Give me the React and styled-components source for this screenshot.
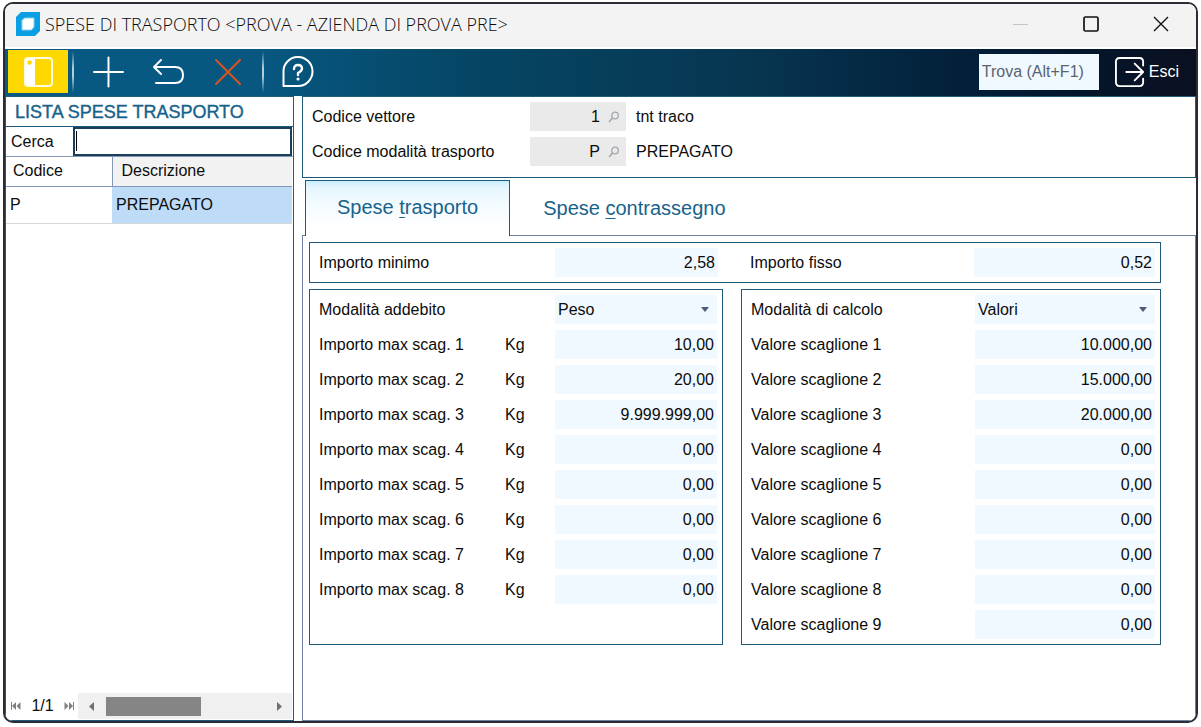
import React, { useState } from "react";
import styled, { createGlobalStyle, css } from "styled-components";

const GlobalStyle = createGlobalStyle`
    * {
        box-sizing: border-box;
    }
    body {
        margin: 0;
        background-color: white;
        color: #0c0c0c;
        font-family: "Liberation Sans", Arial, sans-serif;
        font-size: 16px;
        line-height: 20px;
    }
    button, input, select {
        font: inherit;
        color: inherit;
        margin: 0;
        padding: 0;
        border: none;
        border-radius: 0;
        outline: none;
        background: none;
    }
`

const Page = styled.div`
    display: flex;
    min-height: 100vh;
    padding: 2px 3px 4px;
`

const Window = styled.div`
    flex: 1;
    display: flex;
    flex-direction: column;
    border: 2px solid #2a2d35;
    border-radius: 10px;
    overflow: hidden;
`

const TitleBar = styled.header`
    display: flex;
    align-items: center;
    height: 45px;
    padding: 0 20px 3px 11px;
    gap: 5px;
    background-color: #f3f3f3;
    border-bottom: 2px solid white;
`

const Title = styled.h1`
    flex: 1;
    margin: 0;
    font-family: "Open Sans", "Noto Sans", sans-serif;
    font-size: 18px;
    font-weight: 300;
    line-height: 24px;
    white-space: nowrap;
`

const WindowButtons = styled.div`
    display: flex;
    gap: 40px;
`

const WindowButton = styled.button`
    display: flex;
    align-items: center;
    justify-content: center;
    width: 30px;
    height: 30px;
`

const Toolbar = styled.nav`
    display: flex;
    align-items: center;
    height: 47px;
    padding: 0 17px 2px 3px;
    color: white;
    background: linear-gradient(90deg, #075a84 0%, #075780 22%, #054766 38%, #073651 62%, #03203a 80%, #04162c 90%, #0a1020 100%);
`

const ToolButton = styled.button`
    display: flex;
    align-items: center;
    justify-content: center;
    width: 60px;
    height: 43px;
    background-color: ${props => props.$active ? "#ffd800" : "transparent"};
`

const Divider = styled.span`
    width: 2px;
    height: 42px;
    margin: 0 4px;
    background: linear-gradient(transparent, #b4cbd8 40%, #b4cbd8 60%, transparent);
`

const FindInput = styled.input`
    width: 120px;
    height: 36px;
    margin: 0 16px 0 auto;
    padding: 0 3px;
    background-color: #f0f9ff;
    color: #5b6470;
    &::placeholder {
        color: #5b6470;
        opacity: 1;
    }
`

const ExitButton = styled.button`
    display: flex;
    align-items: center;
    gap: 4px;
`

const Content = styled.div`
    flex: 1;
    display: flex;
    gap: 8px;
`

const Sidebar = styled.aside`
    display: flex;
    flex-direction: column;
    width: 289px;
    border: 1px solid #1d5a7c;
`

const SideTitle = styled.h2`
    margin: 0;
    padding: 0 9px;
    height: 30px;
    line-height: 30px;
    font-size: 18px;
    font-weight: 400;
    color: #17638c;
    -webkit-text-stroke: 0.4px #17638c;
    border-bottom: 1px solid #1d5a7c;
`

const SearchRow = styled.div`
    position: relative;
    display: flex;
    align-items: center;
    padding-left: 5px;
    border-bottom: 1px solid #8397b6;
`

const SearchLabel = styled.label`
    width: 62px;
`

const SearchInput = styled.input`
    flex: 1;
    min-width: 0;
    height: 29px;
    margin-right: 1px;
    padding: 0 4px;
    border: 2px solid #1c3f57;
    caret-color: transparent;
`

const Caret = styled.span`
    position: absolute;
    left: 70px;
    top: 4px;
    width: 1px;
    height: 20px;
    background-color: black;
`

const List = styled.table`
    width: calc(100% - 1px);
    border-collapse: collapse;
    table-layout: fixed;
`

const HeadCell = styled.th`
    width: ${props => props.$width || "auto"};
    height: 29px;
    padding: 0 ${props => props.$pad}px;
    font-weight: 400;
    text-align: left;
    border-bottom: 1px solid #8397b6;
    ${props => props.$sorted && css`
        background-color: #f2f2f2;
        border-left: 1px solid #8397b6;
    `}
`

const Cell = styled.td`
    height: 37px;
    padding: 0 4px;
    border-bottom: 1px solid #d9d9d9;
    background-color: ${props => props.$selected ? "#bedbf8" : "white"};
`

const Pager = styled.footer`
    display: flex;
    align-items: center;
    margin-top: auto;
    padding: 0 1px 1px 4px;
    height: 27px;
`

const PagerButton = styled.button`
    display: flex;
    align-items: center;
    justify-content: center;
    width: 12px;
    height: 20px;
`

const PageCount = styled.span`
    flex: 1;
    text-align: center;
`

const ScrollBar = styled.div`
    display: flex;
    align-items: center;
    width: 214px;
    height: 26px;
    margin-left: 3px;
    padding: 0 7px;
    background-color: #f0f0f0;
`

const ScrollTrack = styled.div`
    flex: 1;
    padding: 0 9px;
`

const ScrollThumb = styled.div`
    width: 95px;
    height: 19px;
    background-color: #858585;
`

const Main = styled.main`
    flex: 1;
    min-width: 0;
    display: flex;
    flex-direction: column;
`

const HeadPanel = styled.section`
    display: flex;
    flex-direction: column;
    gap: 6px;
    padding: 5px 9px 11px;
    border: 1px solid #1d5a7c;
`

const CodeRow = styled.div`
    display: flex;
    align-items: center;
`

const CodeLabel = styled.label`
    width: 218px;
`

const CodeBox = styled.div`
    display: flex;
    align-items: center;
    width: 96px;
    height: 29px;
    margin-right: 10px;
    background-color: #eaeaea;
`

const CodeInput = styled.input`
    width: 70px;
    text-align: right;
`

const LookupButton = styled.button`
    display: flex;
    margin-left: 8px;
`

const Tabs = styled.div`
    display: flex;
    padding-left: 3px;
    margin: 2px 0 -1px;
`

const Tab = styled.button`
    height: 56px;
    padding: ${props => props.$active ? "0 31px 3px" : "0 33px 1px"};
    font-size: 20px;
    line-height: 24px;
    color: #17638c;
    ${props => props.$active && css`
        position: relative;
        border: 1px solid #1d5a7c;
        border-bottom: none;
        background: linear-gradient(#c9ecfc, #e6f6fe 12%, #f4fbff 45%, white 85%);
    `}
`

const Key = styled.span`
    text-decoration: underline;
    text-decoration-thickness: 1px;
    text-underline-offset: 3px;
`

const TabBody = styled.section`
    flex: 1;
    display: flex;
    flex-direction: column;
    gap: 6px;
    padding: 6px 34px 6px 6px;
    border: 1px solid #6f7f9d;
`

const Group = styled.div`
    display: flex;
    flex-direction: column;
    gap: 6px;
    min-width: 0;
    padding: 5px 5px 5px 9px;
    border: 1px solid #1d5a7c;
`

const Columns = styled.div`
    display: grid;
    grid-template-columns: 414fr 420fr;
    gap: 18px;
`

const WideGroup = styled(Group)`
    padding: 5px 0;
`

const Half = styled.div`
    min-width: 0;
    padding: 0 5px 0 9px;
`

const Row = styled.div`
    display: flex;
    align-items: center;
`

const Label = styled.label`
    width: ${props => props.$unit ? "186px" : props.$left ? "236px" : "224px"};
`

const Unit = styled.span`
    width: 50px;
`

const Amount = styled.input`
    flex: 1;
    min-width: 0;
    height: 29px;
    padding: 0 3px;
    text-align: right;
    background-color: #f0f9ff;
`

const SelectBox = styled.div`
    position: relative;
    flex: 1;
    min-width: 0;
`

const Select = styled.select`
    display: block;
    width: 100%;
    height: 29px;
    padding: 0 3px;
    appearance: none;
    background-color: #f0f9ff;
`

const Arrow = styled.svg`
    position: absolute;
    right: 8px;
    top: 12px;
    pointer-events: none;
`

const leftRows = ["10,00", "20,00", "9.999.999,00", "0,00", "0,00", "0,00", "0,00", "0,00"];
const rightRows = ["10.000,00", "15.000,00", "20.000,00", "0,00", "0,00", "0,00", "0,00", "0,00", "0,00"];

const Line = ({children, size = 32, width = 2, color = "white"}) => (
    <svg width={size} height={size} viewBox="0 0 32 32" fill="none" stroke={color} strokeWidth={width} strokeLinecap="round" strokeLinejoin="round">
        {children}
    </svg>
)

const Combo = ({id, options}) => (
    <SelectBox>
        <Select id={id}>
            {options.map(option => <option key={option}>{option}</option>)}
        </Select>
        <Arrow width="8" height="5" viewBox="0 0 8 5"><path d="M0 0H8L4 5Z" fill="#4d5a78"/></Arrow>
    </SelectBox>
)

const Code = ({id, label, value, text}) => (
    <CodeRow>
        <CodeLabel htmlFor={id}>{label}</CodeLabel>
        <CodeBox>
            <CodeInput id={id} defaultValue={value} readOnly/>
            <LookupButton aria-label="Cerca codice">
                <svg width="12" height="12" viewBox="0 0 12 12" fill="none" stroke="#a3a7b0" strokeWidth="1.3">
                    <circle cx="7" cy="4.5" r="3.3"/>
                    <path d="M4.6 7L1 11" strokeWidth="1.6"/>
                </svg>
            </LookupButton>
        </CodeBox>
        {text}
    </CodeRow>
)

const App = () => {
    const [tab, setTab] = useState("trasporto");

    return(
        <Page>
            <GlobalStyle/>
            <Window>
                <TitleBar>
                    <svg width="24" height="24" viewBox="0 0 24 24">
                        <path d="M5 0H24V19L19 24H0V5Z" fill="#0a9fe3"/>
                        <path d="M8.500 6H18V15L15.500 18H6V8.500Z" fill="white" stroke="#8fd2f3" strokeWidth="1"/>
                    </svg>
                    <Title>SPESE DI TRASPORTO &lt;PROVA - AZIENDA DI PROVA PRE&gt;</Title>
                    <WindowButtons>
                        <WindowButton aria-label="Riduci">
                            <svg width="16" height="16"><path d="M0 8.5H15" stroke="#c4c4c4"/></svg>
                        </WindowButton>
                        <WindowButton aria-label="Ingrandisci">
                            <svg width="16" height="16"><rect x="1" y="1" width="14" height="14" rx="1.5" fill="none" stroke="#111" strokeWidth="1.7"/></svg>
                        </WindowButton>
                        <WindowButton aria-label="Chiudi">
                            <svg width="16" height="16"><path d="M1 1L15 15M15 1L1 15" stroke="#111" strokeWidth="1.4"/></svg>
                        </WindowButton>
                    </WindowButtons>
                </TitleBar>
                <Toolbar>
                    <ToolButton $active aria-label="Lista">
                        <Line>
                            <path d="M3 5Q3 2 6 2H13V30H6Q3 30 3 27Z" fill="white" stroke="none"/>
                            <rect x="3" y="2" width="27" height="28" rx="3" strokeWidth="2" stroke="#fffbe0"/>
                            <circle cx="7.500" cy="6.500" r="2.200" fill="#ffd800" stroke="none"/>
                        </Line>
                    </ToolButton>
                    <Divider/>
                    <ToolButton aria-label="Nuovo"><Line><path d="M2 16H31M16.500 1.500V30.500"/></Line></ToolButton>
                    <ToolButton aria-label="Annulla">
                        <Line><path d="M9 4L2 11L9 18M2 11H23Q31 11 31 19Q31 27 23 27H4"/></Line>
                    </ToolButton>
                    <ToolButton aria-label="Elimina"><Line color="#d9541e"><path d="M4 4L28 28M28 4L4 28"/></Line></ToolButton>
                    <Divider/>
                    <ToolButton aria-label="Aiuto">
                        <Line>
                            <path d="M1.500 30V16A14.500 14.500 0 1 1 16 30Z"/>
                            <path d="M12 13Q12 9 16 9Q20 9 20 12.500Q20 15 16 17V19" strokeWidth="2.400"/>
                            <circle cx="16" cy="23" r="0.800" strokeWidth="1.500"/>
                        </Line>
                    </ToolButton>
                    <FindInput aria-label="Trova" placeholder="Trova (Alt+F1)"/>
                    <ExitButton>
                        <Line size={30}><path d="M30 9V5Q30 1 26 1H5Q1 1 1 5V27Q1 31 5 31H26Q30 31 30 27V23"/><path d="M12 16H30M21 7L30 16L21 25"/></Line>
                        Esci
                    </ExitButton>
                </Toolbar>
                <Content>
                    <Sidebar>
                        <SideTitle>LISTA SPESE TRASPORTO</SideTitle>
                        <SearchRow>
                            <SearchLabel htmlFor="cerca">Cerca</SearchLabel>
                            <SearchInput id="cerca"/>
                            <Caret/>
                        </SearchRow>
                        <List>
                            <thead>
                                <tr>
                                    <HeadCell $width="106px" $pad={7}>Codice</HeadCell>
                                    <HeadCell $sorted $pad={9}>Descrizione</HeadCell>
                                </tr>
                            </thead>
                            <tbody>
                                <tr>
                                    <Cell>P</Cell>
                                    <Cell $selected>PREPAGATO</Cell>
                                </tr>
                            </tbody>
                        </List>
                        <Pager>
                            <PagerButton aria-label="Primo">
                                <svg width="10" height="8" fill="#808080"><path d="M0 0H1V8H0ZM5 0V8L1 4ZM9.500 0V8L5.500 4Z"/></svg>
                            </PagerButton>
                            <PageCount>1/1</PageCount>
                            <PagerButton aria-label="Ultimo">
                                <svg width="10" height="8" fill="#808080"><path d="M9 0H10V8H9ZM5 0V8L9 4ZM0.500 0V8L4.500 4Z"/></svg>
                            </PagerButton>
                            <ScrollBar>
                                <PagerButton aria-label="Sinistra">
                                    <svg width="5" height="9" fill="#707070"><path d="M5 0V9L0 4.500Z"/></svg>
                                </PagerButton>
                                <ScrollTrack><ScrollThumb/></ScrollTrack>
                                <PagerButton aria-label="Destra">
                                    <svg width="5" height="9" fill="#707070"><path d="M0 0V9L5 4.500Z"/></svg>
                                </PagerButton>
                            </ScrollBar>
                        </Pager>
                    </Sidebar>
                    <Main>
                        <HeadPanel>
                            <Code id="vettore" label="Codice vettore" value="1" text="tnt traco"/>
                            <Code id="modalita" label="Codice modalità trasporto" value="P" text="PREPAGATO"/>
                        </HeadPanel>
                        <Tabs>
                            <Tab $active={tab === "trasporto"} onClick={() => setTab("trasporto")}>Spese <Key>t</Key>rasporto</Tab>
                            <Tab $active={tab === "contrassegno"} onClick={() => setTab("contrassegno")}>Spese <Key>c</Key>ontrassegno</Tab>
                        </Tabs>
                        <TabBody>
                            <WideGroup>
                                <Columns>
                                    <Half>
                                        <Row>
                                            <Label $left htmlFor="minimo">Importo minimo</Label>
                                            <Amount id="minimo" defaultValue="2,58"/>
                                        </Row>
                                    </Half>
                                    <Half>
                                        <Row>
                                            <Label htmlFor="fisso">Importo fisso</Label>
                                            <Amount id="fisso" defaultValue="0,52"/>
                                        </Row>
                                    </Half>
                                </Columns>
                            </WideGroup>
                            <Columns>
                                <Group>
                                    <Row>
                                        <Label $left htmlFor="addebito">Modalità addebito</Label>
                                        <Combo id="addebito" options={["Peso"]}/>
                                    </Row>
                                    {leftRows.map((value, i) => (
                                        <Row key={i}>
                                            <Label $unit htmlFor={`importo${i}`}>Importo max scag. {i + 1}</Label>
                                            <Unit>Kg</Unit>
                                            <Amount id={`importo${i}`} defaultValue={value}/>
                                        </Row>
                                    ))}
                                </Group>
                                <Group>
                                    <Row>
                                        <Label htmlFor="calcolo">Modalità di calcolo</Label>
                                        <Combo id="calcolo" options={["Valori"]}/>
                                    </Row>
                                    {rightRows.map((value, i) => (
                                        <Row key={i}>
                                            <Label htmlFor={`valore${i}`}>Valore scaglione {i + 1}</Label>
                                            <Amount id={`valore${i}`} defaultValue={value}/>
                                        </Row>
                                    ))}
                                </Group>
                            </Columns>
                        </TabBody>
                    </Main>
                </Content>
            </Window>
        </Page>
    )
}

export default App;
